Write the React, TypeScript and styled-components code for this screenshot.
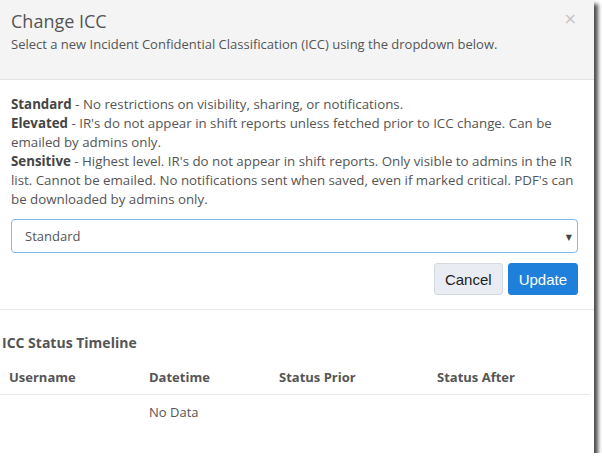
import styled, { createGlobalStyle } from "styled-components";

const Global = createGlobalStyle`
  html, body {
    margin: 0;
    padding: 0;
    background: #fff;
  }
  body {
    font-family: "Open Sans", "DejaVu Sans", sans-serif;
    color: #555;
  }
`;

const Modal = styled.div`
  position: relative;
  width: 594px;
  height: 453px;
  background: #fff;
  box-shadow: 4px 4px 4px rgba(0, 0, 0, 0.7);
  display: flex;
  flex-direction: column;
`;

const Header = styled.div`
  position: relative;
  height: 80px;
  box-sizing: border-box;
  padding: 9px 12px 0 11px;
  background: #f4f4f4;
  border-bottom: 1px solid #e3e3e3;
`;

const Title = styled.h4`
  margin: 0;
  font-size: 18px;
  font-weight: 400;
  line-height: 24px;
  color: #555;
`;

const Subtitle = styled.p`
  margin: 2px 0 0;
  font-size: 13px;
  line-height: 18px;
  color: #555;
`;

const Close = styled.button`
  position: absolute;
  top: 9px;
  right: 17px;
  border: 0;
  background: none;
  padding: 0;
  font-family: "DejaVu Sans", sans-serif;
  font-size: 16px;
  color: #c4c4c4;
  cursor: pointer;
`;

const Body = styled.div`
  padding: 15px 8px 14px 11px;
  border-bottom: 1px solid #e6e6e6;
`;

const Desc = styled.p`
  margin: 0;
  font-size: 13.3px;
  line-height: 19px;
  color: #555;

  b {
    font-weight: 700;
    color: #444;
  }
`;

const Controls = styled.div`
  margin-right: 8px;
`;

const SelectBox = styled.div`
  margin-top: 10px;
  height: 34px;
  box-sizing: border-box;
  border: 1px solid #80b8f0;
  border-radius: 4px;
  display: flex;
  align-items: center;
  padding: 0 5px 0 13px;
  font-size: 13px;
  color: #555;
`;

const Caret = styled.span`
  margin-left: auto;
  font-size: 8px;
  color: #444;
`;

const Actions = styled.div`
  display: flex;
  justify-content: flex-end;
  gap: 5px;
  margin-top: 10px;
`;

const Btn = styled.button<{ $primary?: boolean }>`
  height: 32px;
  padding: 0 10px;
  border-radius: 3px;
  font-family: "Liberation Sans", Arial, sans-serif;
  font-size: 15px;
  cursor: pointer;
  border: 1px solid ${(p) => (p.$primary ? "#1f80dc" : "#d5d9e1")};
  background: ${(p) => (p.$primary ? "#1f80dc" : "#e9ecf3")};
  color: ${(p) => (p.$primary ? "#fff" : "#222")};
`;

const Section = styled.div`
  padding: 22px 6px 0 2px;
`;

const SectionTitle = styled.h5`
  margin: 0;
  font-size: 14px;
  font-weight: 700;
  line-height: 22px;
  color: #555;
`;

const Table = styled.table`
  margin: 14px 0 0 -2px;
  width: 590px;
  border-collapse: collapse;
  font-size: 13px;
  color: #555;

  th {
    text-align: left;
    font-weight: 700;
    padding: 0 9px 7px;
    line-height: 19px;
    border-bottom: 1px solid #e6e6e6;
  }
  td {
    padding: 8px 9px;
    line-height: 19px;
  }
`;

export default function App() {
  return (
    <>
      <Global />
      <Modal>
        <Header>
          <Title>Change ICC</Title>
          <Subtitle>
            Select a new Incident Confidential Classification (ICC) using the dropdown below.
          </Subtitle>
          <Close type="button" aria-label="Close">×</Close>
        </Header>
        <Body>
          <Desc>
            <b>Standard</b> - No restrictions on visibility, sharing, or notifications.
            <br />
            <b>Elevated</b> - IR's do not appear in shift reports unless fetched prior to ICC change. Can be
            emailed by admins only.
            <br />
            <b>Sensitive</b> - Highest level. IR's do not appear in shift reports. Only visible to admins in the IR
            list. Cannot be emailed. No notifications sent when saved, even if marked critical. PDF's can
            be downloaded by admins only.
          </Desc>
          <Controls>
            <SelectBox>
              Standard
              <Caret>▼</Caret>
            </SelectBox>
            <Actions>
              <Btn type="button">Cancel</Btn>
              <Btn type="button" $primary>Update</Btn>
            </Actions>
          </Controls>
        </Body>
        <Section>
          <SectionTitle>ICC Status Timeline</SectionTitle>
          <Table>
            <colgroup>
              <col style={{ width: 140 }} />
              <col style={{ width: 130 }} />
              <col style={{ width: 158 }} />
              <col />
            </colgroup>
            <thead>
              <tr>
                <th>Username</th>
                <th>Datetime</th>
                <th>Status Prior</th>
                <th>Status After</th>
              </tr>
            </thead>
            <tbody>
              <tr>
                <td />
                <td>No Data</td>
                <td />
                <td />
              </tr>
            </tbody>
          </Table>
        </Section>
      </Modal>
    </>
  );
}
